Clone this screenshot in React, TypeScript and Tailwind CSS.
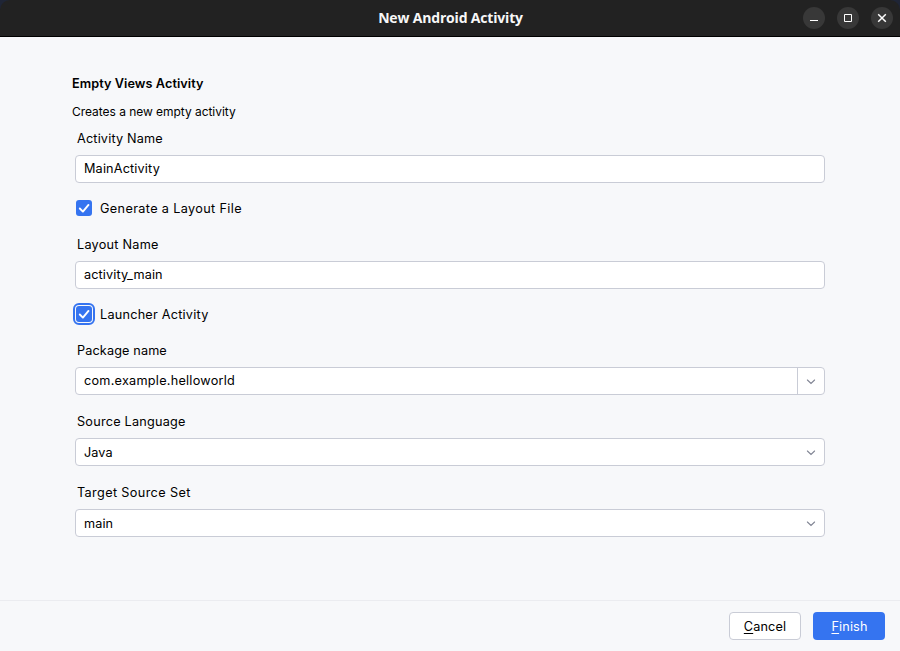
import React from "react";

function Label({ children, className = "" }: { children: React.ReactNode; className?: string }) {
  return <div className={`ml-[5px] h-4 text-[12.7px] leading-[18px] ${className}`}>{children}</div>;
}

function Chevron() {
  return (
    <svg width="16" height="16" viewBox="0 0 16 16" fill="none" stroke="#818594">
      <path d="M4.4 7 8 10.4 11.6 7" strokeWidth="1.1" strokeLinecap="round" />
    </svg>
  );
}

function Field({ children, trailing, className = "leading-[28px] tracking-[0.08px]" }: { children: React.ReactNode; trailing?: React.ReactNode; className?: string }) {
  return (
    <div className={`mx-[3px] flex h-7 rounded-[4px] border border-[#c9ccd6] bg-white text-[12.7px] ${className}`}>
      <div className="h-[26px] flex-1 pl-2">{children}</div>
      {trailing}
    </div>
  );
}

function Check({ focused = false, children, className = "" }: { focused?: boolean; children: React.ReactNode; className?: string }) {
  return (
    <div className={`ml-1 flex h-4 gap-2 text-[12.7px] leading-[18px] ${className}`}>
      <div className={`flex size-4 items-center justify-center rounded-[3px] bg-[#3574f0] ${focused ? "outline-2 outline-offset-1 outline-[#3574f0]" : ""}`}>
        <svg width="16" height="16" viewBox="0 0 16 16" fill="none" stroke="white" strokeWidth="1.9">
          <path d="M3.8 8.5 6.9 11.6 12.5 4.9" strokeLinecap="round" strokeLinejoin="round" />
        </svg>
      </div>
      <span>{children}</span>
    </div>
  );
}

function WindowButton({ children }: { children: React.ReactNode }) {
  return (
    <div className="flex size-[22px] items-center justify-center rounded-full bg-[#383838]">
      <svg width="12" height="12" viewBox="0 0 12 12" fill="none" stroke="white">{children}</svg>
    </div>
  );
}

export default function App() {
  return (
    <div className="flex h-[651px] w-[900px] flex-col bg-[#f7f8fa] font-['Inter',sans-serif] text-black">
      <div className="bg-[#1f2536]">
        <header className="grid h-[37px] grid-cols-[1fr_auto_1fr] items-center rounded-t-[10px] border-b border-black bg-[#222222] text-[#f7f7f7]">
          <div />
          <div className="pb-px pl-px font-['Open_Sans',sans-serif] text-[14px] font-bold tracking-[-0.18px]">New Android Activity</div>
          <div className="flex justify-end gap-3 pr-[7px]">
            <WindowButton><path d="M2 8.5h8" /></WindowButton>
            <WindowButton><path d="M2.5 2.5h7v7h-7z" /></WindowButton>
            <WindowButton><path d="m2.2 2.2 7.6 7.6m0-7.6-7.6 7.6" strokeWidth="1.5" /></WindowButton>
          </div>
        </header>
      </div>
      <main className="flex-1 px-[72px] pt-[38px]">
        <div className="h-4 text-[12.7px] font-semibold leading-[18px] tracking-[0.06px]">Empty Views Activity</div>
        <div className="mt-[13px] h-4 text-[12px] leading-4 tracking-[-0.04px]">Creates a new empty activity</div>
        <Label className="mt-[10px] mb-[9px] tracking-[0.16px]">Activity Name</Label>
        <Field className="leading-[25px] tracking-[0.15px]">MainActivity</Field>
        <div className="h-[17px]" />
        <Check className="tracking-[0.35px]">Generate a Layout File</Check>
        <Label className="mt-5 mb-[9px] tracking-[0.24px]">Layout Name</Label>
        <Field className="leading-[25px] tracking-[0.1px]">activity_main</Field>
        <div className="h-[17px]" />
        <Check focused className="tracking-[0.22px]">Launcher Activity</Check>
        <Label className="mt-5 mb-[9px] tracking-[0.12px]">Package name</Label>
        <Field className="leading-[25px] tracking-[0.24px]" trailing={<div className="flex w-[27px] items-center justify-center border-l border-[#c9ccd6]"><Chevron /></div>}>com.example.helloworld</Field>
        <Label className="mt-[18px] mb-[9px] tracking-[0.22px]">Source Language</Label>
        <Field trailing={<div className="flex w-[27px] items-center justify-center"><Chevron /></div>}>Java</Field>
        <Label className="mt-[18px] mb-[9px] tracking-[0.36px]">Target Source Set</Label>
        <Field trailing={<div className="flex w-[27px] items-center justify-center"><Chevron /></div>}>main</Field>
      </main>
      <footer className="flex h-[51px] justify-end gap-3 border-t border-[#ebecf0] pt-[11px] pr-[15px] text-[12.7px] tracking-[0.12px]">
        <button className="h-7 w-[72px] rounded-[4px] border border-[#c9ccd6] bg-white pt-px"><span className="underline underline-offset-2">C</span>ancel</button>
        <button className="h-7 w-[72px] rounded-[4px] bg-[#3574f0] pt-px pl-px text-white"><span className="underline underline-offset-2">F</span>inish</button>
      </footer>
    </div>
  );
}
